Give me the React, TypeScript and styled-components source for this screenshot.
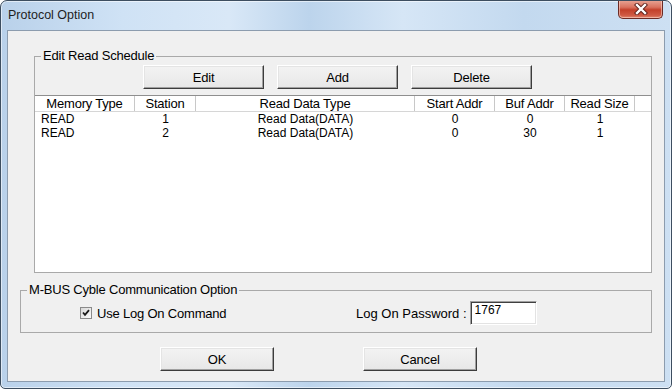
import styled, { createGlobalStyle } from "styled-components";

const Global = createGlobalStyle`
  html, body {
    margin: 0;
    padding: 0;
    background: #ffffff;
  }
  * {
    box-sizing: border-box;
  }
`;

const UI_FONT = `"Liberation Sans", Arial, sans-serif`;

const Window = styled.div`
  width: 672px;
  height: 389px;
  border: 1px solid #3d4e60;
  border-radius: 7px 7px 5px 5px;
  background: linear-gradient(
    90deg,
    #b9d1ea 0%,
    #cfe2f5 18%,
    #d9e8f7 34%,
    #bcd4ec 46%,
    #d6e6f6 60%,
    #c3d9ef 78%,
    #cde0f3 100%
  );
  box-shadow: inset 0 0 0 1px rgba(255, 255, 255, 0.55);
  display: flex;
  flex-direction: column;
  font-family: ${UI_FONT};
  color: #000;
  overflow: hidden;
`;

const TitleBar = styled.div`
  height: 29px;
  display: flex;
  align-items: flex-start;
  justify-content: space-between;
  padding-left: 7px;
`;

const Title = styled.span`
  font-size: 12.5px;
  line-height: 28px;
  color: #1e1e1e;
`;

const CloseBtn = styled.div`
  width: 45px;
  height: 19px;
  margin-right: 8px;
  margin-top: -1px;
  border: 1px solid #6b2b25;
  border-top: none;
  border-radius: 0 0 5px 5px;
  background: linear-gradient(#e9a797 0%, #d9725f 40%, #c3402a 55%, #cf5a44 85%, #e0876f 100%);
  box-shadow: inset 0 0 0 1px rgba(255, 220, 210, 0.55);
  display: flex;
  align-items: center;
  justify-content: center;
`;

const Client = styled.div`
  flex: 1;
  margin: 0 6px 6px 6px;
  border: 1px solid #8c9cae;
  background: #f0f0f0;
  display: flex;
  flex-direction: column;
  letter-spacing: -0.2px;
`;

const Group = styled.fieldset<{ $left: number }>`
  margin: 0 12px 0 ${(p) => p.$left}px;
  padding: 0;
  border: 1px solid #a9a9a9;
  min-width: 0;
`;

const Legend = styled.legend`
  margin-left: 6px;
  padding: 0 2px;
  font-size: 13px;
  line-height: 14px;
`;

const ScheduleGroup = styled(Group)`
  margin-top: 18px;
`;

const OptionGroup = styled(Group)`
  margin-top: 10px;
`;

const ToolRow = styled.div`
  display: flex;
  gap: 13px;
  padding: 2px 0 0 108px;
`;

const Button = styled.button<{ $w: number }>`
  width: ${(p) => p.$w}px;
  height: 24px;
  padding: 0;
  font-family: ${UI_FONT};
  font-size: 13px;
  letter-spacing: -0.2px;
  color: #000;
  background: linear-gradient(#f3f3f3, #e7e7e7);
  border: 1px solid;
  border-color: #ffffff #3c3c3c #3c3c3c #ffffff;
  box-shadow: inset -1px -1px 0 #a0a0a0, inset 1px 1px 0 #e4e4e4;
`;

const List = styled.div`
  margin-top: 6px;
  height: 177px;
  border-top: 1px solid #8f8f8f;
  background: #ffffff;
`;

const Columns = "100px 61px 219px 80px 70px 70px 1fr";

const HeaderRow = styled.div`
  display: grid;
  grid-template-columns: ${Columns};
  height: 16px;
  border-bottom: 1px solid #d6d6d6;
  font-size: 13px;
`;

const HeaderCell = styled.div`
  line-height: 15px;
  text-align: center;
  border-right: 1px solid #c8c8c8;
  white-space: nowrap;
  &:last-child {
    border-right: none;
  }
`;

const Row = styled.div`
  display: grid;
  grid-template-columns: ${Columns};
  height: 14px;
  line-height: 14px;
  font-size: 12px;
  letter-spacing: 0;
`;

const Cell = styled.div<{ $align?: "left" | "center" }>`
  text-align: ${(p) => p.$align ?? "center"};
  padding-left: ${(p) => (p.$align === "left" ? "6px" : "0")};
  white-space: nowrap;
`;

const OptionRow = styled.div`
  display: flex;
  align-items: center;
  padding: 4px 0 7px 59px;
`;

const CheckLabel = styled.label`
  width: 276px;
  display: flex;
  align-items: center;
  gap: 5px;
  font-size: 13px;
`;

const CheckBox = styled.span`
  width: 12px;
  height: 12px;
  border: 1px solid #8a8a8a;
  background: linear-gradient(135deg, #d8d8d8, #fbfbfb);
  display: flex;
  align-items: center;
  justify-content: center;
`;

const PassGroup = styled.div`
  display: flex;
  align-items: center;
  gap: 3px;
  font-size: 13px;
  letter-spacing: 0;
`;

const TextBox = styled.div`
  width: 67px;
  height: 24px;
  border: 1px solid;
  border-color: #a0a0a0 #ffffff #ffffff #a0a0a0;
  box-shadow: inset 1px 1px 0 #404040, inset -1px -1px 0 #e3e3e3;
  background: #ffffff;
  font-size: 12px;
  line-height: 14px;
  padding: 1px 0 0 4px;
`;

const Footer = styled.div`
  display: flex;
  gap: 89px;
  padding: 14px 0 0 152px;
`;

const rows = [
  { type: "READ", station: 1, data: "Read Data(DATA)", start: 0, buf: 0, size: 1 },
  { type: "READ", station: 2, data: "Read Data(DATA)", start: 0, buf: 30, size: 1 },
];

const headers = ["Memory Type", "Station", "Read Data Type", "Start Addr", "Buf Addr", "Read Size", ""];

export default function App() {
  return (
    <>
      <Global />
      <Window>
        <TitleBar>
          <Title>Protocol Option</Title>
          <CloseBtn>
            <svg width="14" height="12" viewBox="0 0 14 12">
              <path d="M3 2 L11 10 M11 2 L3 10" stroke="#5a1e18" strokeWidth="4.2" strokeLinecap="square" />
              <path d="M3 2 L11 10 M11 2 L3 10" stroke="#ffffff" strokeWidth="2.4" strokeLinecap="square" />
            </svg>
          </CloseBtn>
        </TitleBar>
        <Client>
          <ScheduleGroup $left={26}>
            <Legend>Edit Read Schedule</Legend>
            <ToolRow>
              <Button $w={121}>Edit</Button>
              <Button $w={121}>Add</Button>
              <Button $w={121}>Delete</Button>
            </ToolRow>
            <List>
              <HeaderRow>
                {headers.map((h, i) => (
                  <HeaderCell key={i}>{h}</HeaderCell>
                ))}
              </HeaderRow>
              {rows.map((r, i) => (
                <Row key={i}>
                  <Cell $align="left">{r.type}</Cell>
                  <Cell>{r.station}</Cell>
                  <Cell>{r.data}</Cell>
                  <Cell>{r.start}</Cell>
                  <Cell>{r.buf}</Cell>
                  <Cell>{r.size}</Cell>
                  <Cell />
                </Row>
              ))}
            </List>
          </ScheduleGroup>
          <OptionGroup $left={12}>
            <Legend>M-BUS Cyble Communication Option</Legend>
            <OptionRow>
              <CheckLabel>
                <CheckBox>
                  <svg width="8" height="8" viewBox="0 0 8 8">
                    <path d="M1 3.5 L3 5.8 L7 1.2" stroke="#1a1a1a" strokeWidth="1.8" fill="none" />
                  </svg>
                </CheckBox>
                Use Log On Command
              </CheckLabel>
              <PassGroup>
                Log On Password :
                <TextBox>1767</TextBox>
              </PassGroup>
            </OptionRow>
          </OptionGroup>
          <Footer>
            <Button $w={114}>OK</Button>
            <Button $w={114}>Cancel</Button>
          </Footer>
        </Client>
      </Window>
    </>
  );
}
